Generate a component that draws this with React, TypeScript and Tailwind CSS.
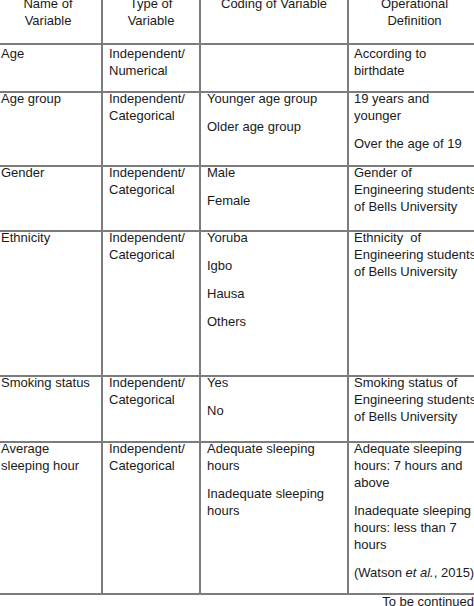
import type { ReactNode } from "react";

type Row = {
  height: string;
  pad?: string;
  cells: ReactNode[][];
};

// each cell is a list of paragraphs, lines split with <br />
const ROWS: Row[] = [
  {
    height: "h-[48px]",
    pad: "pt-[3px]",
    cells: [
      ["Age"],
      [<>Independent/<br />Numerical</>],
      [],
      [<>According to<br />birthdate</>],
    ],
  },
  {
    height: "h-[74px]",
    cells: [
      ["Age group"],
      [<>Independent/<br />Categorical</>],
      ["Younger age group", "Older age group"],
      [<>19 years and<br />younger</>, "Over the age of 19"],
    ],
  },
  {
    height: "h-[65px]",
    cells: [
      ["Gender"],
      [<>Independent/<br />Categorical</>],
      ["Male", "Female"],
      [<>Gender of<br />Engineering students<br />of Bells University</>],
    ],
  },
  {
    height: "h-[145px]",
    cells: [
      ["Ethnicity"],
      [<>Independent/<br />Categorical</>],
      ["Yoruba", "Igbo", "Hausa", "Others"],
      [<>Ethnicity  of<br />Engineering students<br />of Bells University</>],
    ],
  },
  {
    height: "h-[66px]",
    cells: [
      ["Smoking status"],
      [<>Independent/<br />Categorical</>],
      ["Yes", "No"],
      [<>Smoking status of<br />Engineering students<br />of Bells University</>],
    ],
  },
  {
    height: "h-[152px]",
    cells: [
      [<>Average<br />sleeping hour</>],
      [<>Independent/<br />Categorical</>],
      [<>Adequate sleeping<br />hours</>, <>Inadequate sleeping<br />hours</>],
      [
        <>Adequate sleeping<br />hours: 7 hours and<br />above</>,
        <>Inadequate sleeping<br />hours: less than 7<br />hours</>,
        <>(Watson <i>et al.</i>, 2015)</>,
      ],
    ],
  },
];

const COLS = ["w-[108px] border-r-2", "w-[98px] border-r-2", "w-[148px] border-r-2", "w-[131px]"];

function Cell({ paras, col, pad }: { paras: ReactNode[]; col: number; pad?: string }) {
  return (
    <div className={`${COLS[col]} shrink-0 border-[#7c7c7c] ${col === 3 ? "pl-[5px]" : "pl-[6px]"} ${pad ?? ""}`}>
      <div className="-mt-[3px] flex flex-col gap-[11px]">
        {paras.map((p, i) => (
          <p key={i} className="whitespace-pre">{p}</p>
        ))}
      </div>
    </div>
  );
}

export default function App() {
  return (
    <div className="h-[606px] w-[474px] overflow-hidden bg-white text-[13px] leading-[17px] text-[#1a1a1a] font-['Liberation_Sans',Arial,sans-serif]">
      <div className="-ml-[5px] -mt-[1px] w-[485px]">
        {/* header */}
        <div className="flex h-[46px] border-b-2 border-[#7c7c7c]">
          {[
            <>Name of<br />Variable</>,
            <>Type of<br />Variable</>,
            <>Coding of Variable</>,
            <>Operational<br />Definition</>,
          ].map((h, i) => (
            <div key={i} className={`${COLS[i]} shrink-0 border-[#7c7c7c] text-center`}>
              <p className="-mt-[4px]">{h}</p>
            </div>
          ))}
        </div>

        {ROWS.map((row, r) => (
          <div key={r} className={`flex ${row.height} border-b-2 border-[#7c7c7c]`}>
            {row.cells.map((c, i) => (
              <Cell key={i} paras={c} col={i} pad={row.pad} />
            ))}
          </div>
        ))}

        <p className="-mt-[2px] pr-[6px] text-right">To be continued</p>
      </div>
    </div>
  );
}
